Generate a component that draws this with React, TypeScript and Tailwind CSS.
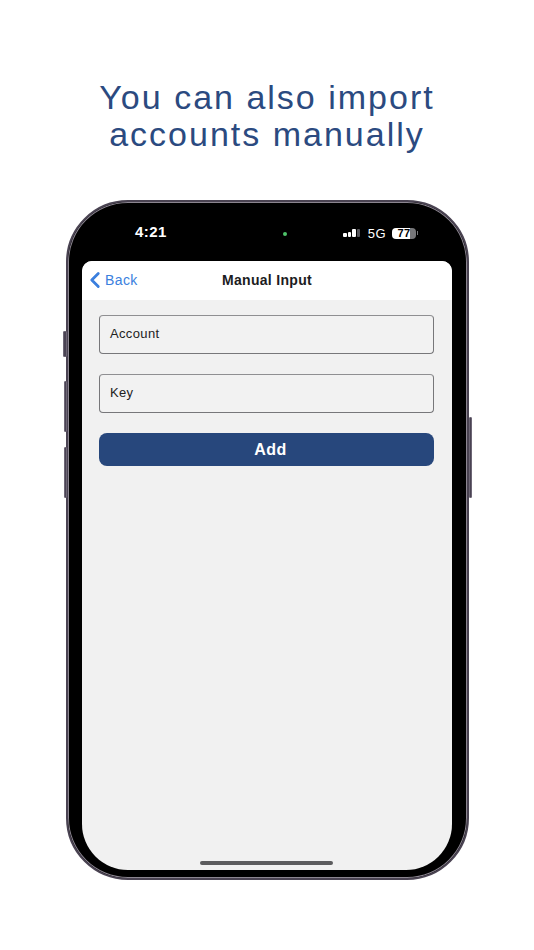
import React from 'react'
import { ChevronLeft } from 'lucide-react'

const font = { fontFamily: '"Liberation Sans", Arial, sans-serif' }

const SideButton = ({ className }: { className: string }) => (
    <div className={`absolute rounded-[1px] bg-[#4a4353] border border-[#6d6675] ${className}`} />
)

const Field = ({ label }: { label: string }) => (
    <div className="h-[39px] rounded-[4px] border border-[#77777a] border-t-[#8f8f92] bg-[#f2f2f2] flex items-center pl-[10px] pb-[2px] text-[13px] leading-none text-[#222222] tracking-[0.35px]">
        {label}
    </div>
)

const StatusBar = () => (
    <div className="h-[57px] shrink-0 relative flex items-center text-white">
        <span className="ml-[53px] mt-[-1px] text-[15px] font-bold tracking-[0.4px]">4:21</span>
        <div className="absolute left-[201px] top-[28px] w-[4px] h-[4px] rounded-full bg-[#4fc46a]" />
        <div className="ml-auto mr-[34px] mt-[1px] flex items-center">
            <div className="flex items-end gap-[1px] h-[8px]">
                <div className="w-[4px] h-[4px] rounded-[1px] bg-white" />
                <div className="w-[3px] h-[5px] rounded-[1px] bg-white" />
                <div className="w-[4px] h-[8px] rounded-[1px] bg-white" />
                <div className="w-[3px] h-[8px] rounded-[1px] bg-[#55555a]" />
            </div>
            <span className="ml-[8px] text-[13px] font-normal leading-none tracking-[0.5px]">5G</span>
            <div className="ml-[6px] w-[24px] h-[11px] rounded-[4px] bg-[linear-gradient(90deg,#ffffff_0%,#ffffff_77%,#77777a_77%)] flex items-center justify-center text-[11px] font-bold leading-none text-black tracking-[0.5px]">
                77
            </div>
            <div className="ml-[1px] w-[1px] h-[4px] bg-[#77777a]" />
        </div>
    </div>
)

export default function App() {
    return (
        <div className="w-[534px] h-[950px] bg-white overflow-hidden flex flex-col" style={font}>
            {/* Heading */}
            <div className="h-[200px] shrink-0 pt-[79px] text-center text-[34px] leading-[37px] tracking-[2px] text-[#2b4a80]">
                <div>You can also import</div>
                <div>accounts manually</div>
            </div>

            {/* Phone frame */}
            <div className="relative ml-[66px] w-[403px] h-[680px] rounded-[62px] bg-black border-[2px] border-[#4a4352] shadow-[inset_0_0_0_1px_#8b8590]">
                <SideButton className="left-[-5px] w-[4px] top-[129px] h-[26px]" />
                <SideButton className="left-[-4px] w-[3px] top-[179px] h-[51px]" />
                <SideButton className="left-[-4px] w-[3px] top-[245px] h-[51px]" />
                <SideButton className="right-[-5px] w-[3px] top-[215px] h-[81px]" />

                <div className="h-full flex flex-col pl-[14px] pr-[15px] pb-[8px] pt-[2px]">
                    <StatusBar />

                    {/* Screen */}
                    <div className="flex-1 flex flex-col rounded-t-[10px] rounded-b-[46px] overflow-hidden bg-[#f1f1f1]">
                        <div className="h-[39px] shrink-0 bg-white relative flex items-center justify-center text-[14px] font-bold text-[#1c1c1e] tracking-[0.3px]">
                            <div className="absolute left-[0px] top-[6px] flex items-center text-[#3b7fde]">
                                <ChevronLeft size={26} strokeWidth={2.6} />
                                <span className="ml-[-3px] text-[14px] font-normal tracking-[0.4px]">Back</span>
                            </div>
                            Manual Input
                        </div>

                        <div className="flex-1 flex flex-col pl-[17px] pr-[18px] pt-[15px] relative">
                            <Field label="Account" />
                            <div className="mt-[20px]">
                                <Field label="Key" />
                            </div>
                            <button className="mt-[20px] h-[33px] w-full rounded-[8px] bg-[#27477c] pl-[8px] text-white text-[16px] font-bold tracking-[0.4px]">
                                Add
                            </button>
                            <div className="mt-auto mb-[5px] mx-auto w-[133px] h-[4px] rounded-full bg-[#5c5c5e]" />
                        </div>
                    </div>
                </div>
            </div>
        </div>
    )
}
